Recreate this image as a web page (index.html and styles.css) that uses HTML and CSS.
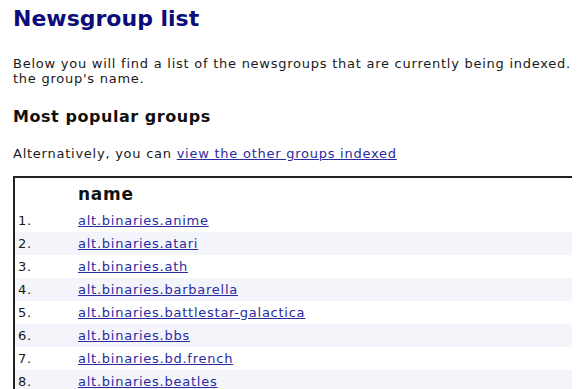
FILE: index.html
```html
<!DOCTYPE html>
<html>
<head>
<meta charset="utf-8">
<link rel="stylesheet" href="styles.css">
</head>
<body>
<div class="page">
  <h1 class="title">Newsgroup list</h1>
  <p class="intro">Below you will find a list of the newsgroups that are currently being indexed.<br>the group's name.</p>
  <h2 class="subtitle">Most popular groups</h2>
  <p class="alt">Alternatively, you can <a href="#">view the other groups indexed</a></p>
  <table class="groups">
    <thead>
      <tr><th class="num"></th><th class="name">name</th></tr>
    </thead>
    <tbody>
      <tr><td class="num">1.</td><td><a href="#">alt.binaries.anime</a></td></tr>
      <tr class="odd"><td class="num">2.</td><td><a href="#">alt.binaries.atari</a></td></tr>
      <tr><td class="num">3.</td><td><a href="#">alt.binaries.ath</a></td></tr>
      <tr class="odd"><td class="num">4.</td><td><a href="#">alt.binaries.barbarella</a></td></tr>
      <tr><td class="num">5.</td><td><a href="#">alt.binaries.battlestar-galactica</a></td></tr>
      <tr class="odd"><td class="num">6.</td><td><a href="#">alt.binaries.bbs</a></td></tr>
      <tr><td class="num">7.</td><td><a href="#">alt.binaries.bd.french</a></td></tr>
      <tr class="odd"><td class="num">8.</td><td><a href="#">alt.binaries.beatles</a></td></tr>
    </tbody>
  </table>
</div>
</body>
</html>
```
FILE: styles.css
```css
html, body {
  margin: 0;
  padding: 0;
  background: #ffffff;
  overflow: hidden;
}
.page {
  padding: 6px 0 0 13px;
  font-family: "DejaVu Sans", Verdana, sans-serif;
  font-size: 13px;
  letter-spacing: 0.75px;
  color: #1a1a1a;
}
.title {
  margin: 0;
  font-size: 22px;
  line-height: 26px;
  font-weight: bold;
  letter-spacing: 0;
  color: #0c0c7a;
}
.intro {
  margin: 24px 0 0 0;
  line-height: 15px;
  white-space: nowrap;
}
.subtitle {
  margin: 21px 0 0 0;
  font-size: 16px;
  line-height: 20px;
  font-weight: bold;
  letter-spacing: 0.55px;
  color: #111111;
}
.alt {
  margin: 19px 0 0 0;
  line-height: 15px;
}
a {
  color: #2b2ba0;
  text-decoration: underline;
}
.groups {
  margin-top: 15px;
  width: 559px;
  border-collapse: collapse;
  border-top: 2px solid #222222;
  border-left: 2px solid #222222;
}
.groups th {
  text-align: left;
  font-size: 17px;
  font-weight: bold;
  letter-spacing: 0.75px;
  color: #111111;
  height: 31px;
  padding: 0 3px;
}
.groups td {
  height: 23px;
  padding: 0 3px;
  font-size: 13px;
}
.groups .num {
  width: 54px;
}
.groups tr.odd td {
  background: #f4f5fa;
}
```
